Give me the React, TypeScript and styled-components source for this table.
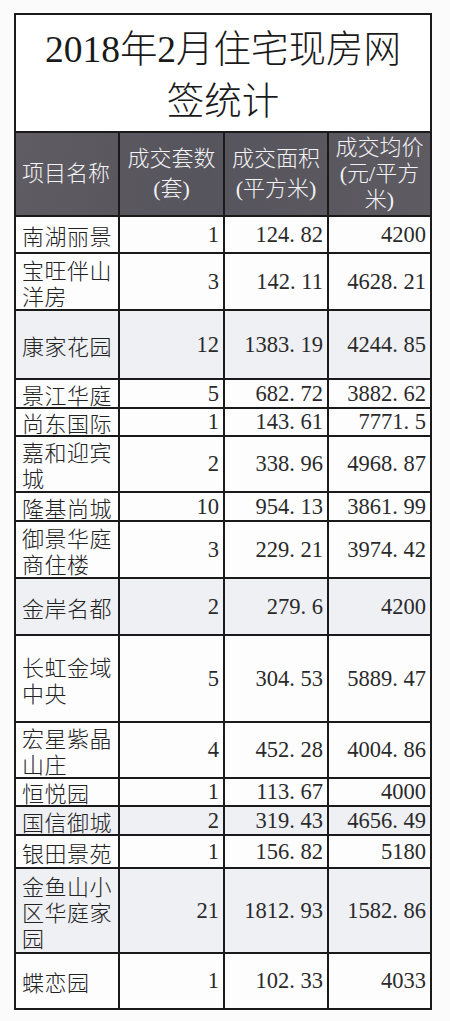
import { Fragment } from 'react';
import styled, { createGlobalStyle } from 'styled-components';

interface Deal {
	name: string;
	units: string;
	area: string;
	price: string;
	height: number;
	shaded?: boolean;
}

const deals: Deal[] = [
	{ name: '南湖丽景', units: '1', area: '124.82', price: '4200', height: 37 },
	{ name: '宝旺伴山洋房', units: '3', area: '142.11', price: '4628.21', height: 57 },
	{ name: '康家花园', units: '12', area: '1383.19', price: '4244.85', height: 69, shaded: true },
	{ name: '景江华庭', units: '5', area: '682.72', price: '3882.62', height: 29 },
	{ name: '尚东国际', units: '1', area: '143.61', price: '7771.5', height: 28 },
	{ name: '嘉和迎宾城', units: '2', area: '338.96', price: '4968.87', height: 56 },
	{ name: '隆基尚城', units: '10', area: '954.13', price: '3861.99', height: 29 },
	{ name: '御景华庭商住楼', units: '3', area: '229.21', price: '3974.42', height: 57 },
	{ name: '金岸名都', units: '2', area: '279.6', price: '4200', height: 57, shaded: true },
	{ name: '长虹金域中央', units: '5', area: '304.53', price: '5889.47', height: 87 },
	{ name: '宏星紫晶山庄', units: '4', area: '452.28', price: '4004.86', height: 56 },
	{ name: '恒悦园', units: '1', area: '113.67', price: '4000', height: 28 },
	{ name: '国信御城', units: '2', area: '319.43', price: '4656.49', height: 29, shaded: true },
	{ name: '银田景苑', units: '1', area: '156.82', price: '5180', height: 33 },
	{ name: '金鱼山小区华庭家园', units: '21', area: '1812.93', price: '1582.86', height: 85, shaded: true },
	{ name: '蝶恋园', units: '1', area: '102.33', price: '4033', height: 56 },
];

const COLUMNS = '104px 105px 104px 103px';

const GlobalStyle = createGlobalStyle`
	body {
		margin: 0;
		background: #fbfbfc;
		font-family: 'Liberation Serif', 'Noto Sans CJK SC', serif;
		color: #1c1c1c;
	}
`;

// SimSun-style numbers: the decimal point takes a full half-width cell
function Num({ value }: { value: string }) {
	const [int, frac] = value.split('.');
	return (
		<Fragment>
			{int}
			{frac !== undefined && (
				<>
					<Dot>.</Dot>
					{frac}
				</>
			)}
		</Fragment>
	);
}

export default function App() {
	return (
		<Page>
			<GlobalStyle />
			<Title>
				2018年2月住宅现房网
				<br />
				签统计
			</Title>
			<Table>
				<HeadRow>
					<HeadCell $align='left'>项目名称</HeadCell>
					<HeadCell>
						成交套数
						<br />
						(套)
					</HeadCell>
					<HeadCell>
						成交面积
						<br />
						(平方米)
					</HeadCell>
					<HeadCell $tight>
						成交均价
						<br />
						(元/平方
						<br />
						米)
					</HeadCell>
				</HeadRow>
				{deals.map((d) => (
					<Row key={d.name} $height={d.height} $shaded={d.shaded}>
						<NameCell>{d.name}</NameCell>
						<NumCell>
							<Num value={d.units} />
						</NumCell>
						<NumCell>
							<Num value={d.area} />
						</NumCell>
						<NumCell>
							<Num value={d.price} />
						</NumCell>
					</Row>
				))}
			</Table>
		</Page>
	);
}

const Page = styled.div`
	padding: 13px 0 0 14px;
	width: 418px;
`;

const Title = styled.h1`
	box-sizing: border-box;
	margin: 0;
	height: 118px;
	padding-top: 9px;
	border: 2px solid #1a1a1a;
	border-bottom: none;
	background: #fff;
	font-family: 'Liberation Serif', 'Noto Sans CJK SC', serif;
	font-weight: 300;
	font-size: 37.5px;
	line-height: 52px;
	text-align: center;
	color: #1a1a1a;
`;

const Table = styled.div`
	border: 2px solid #1a1a1a;
	border-bottom: none;
	border-right: none;
`;

const HeadRow = styled.div`
	display: grid;
	grid-template-columns: ${COLUMNS};
	height: 84px;
	box-sizing: border-box;
	border-bottom: 2px solid #1a1a1a;
	background: linear-gradient(100deg, #5f5c63 0%, #56545c 45%, #5e5b62 100%);
`;

const HeadCell = styled.div<{ $align?: 'left' | 'center'; $tight?: boolean }>`
	display: flex;
	flex-direction: column;
	justify-content: center;
	align-items: ${(p) => (p.$align === 'left' ? 'flex-start' : 'center')};
	padding-left: ${(p) => (p.$align === 'left' ? '6px' : '0')};
	border-right: 2px solid #1a1a1a;
	font-family: 'Liberation Serif', 'Noto Sans CJK SC', serif;
	font-weight: 300;
	font-size: 22px;
	line-height: ${(p) => (p.$tight ? '26px' : '30px')};
	color: #f3f3f5;
	text-align: center;
	white-space: nowrap;
`;

const Row = styled.div<{ $height: number; $shaded?: boolean }>`
	display: grid;
	grid-template-columns: ${COLUMNS};
	box-sizing: border-box;
	height: ${(p) => p.$height}px;
	border-bottom: 2px solid #1a1a1a;
	background: ${(p) => (p.$shaded ? '#eff0f4' : '#fdfdfe')};
`;

const Cell = styled.div`
	display: flex;
	align-items: center;
	border-right: 2px solid #1a1a1a;
`;

const NameCell = styled(Cell)`
	padding: 0 4px 0 6px;
	font-family: 'Noto Sans CJK SC', sans-serif;
	font-weight: 300;
	font-size: 22px;
	line-height: 26px;
	letter-spacing: 0.5px;
	color: #222;
`;

const NumCell = styled(Cell)`
	justify-content: flex-end;
	padding-right: 4px;
	font-family: 'Liberation Serif', serif;
	font-size: 22.5px;
	line-height: 24px;
	color: #2a2a2a;
	white-space: nowrap;
`;

const Dot = styled.span`
	display: inline-block;
	width: 0.5em;
	text-align: left;
`;
